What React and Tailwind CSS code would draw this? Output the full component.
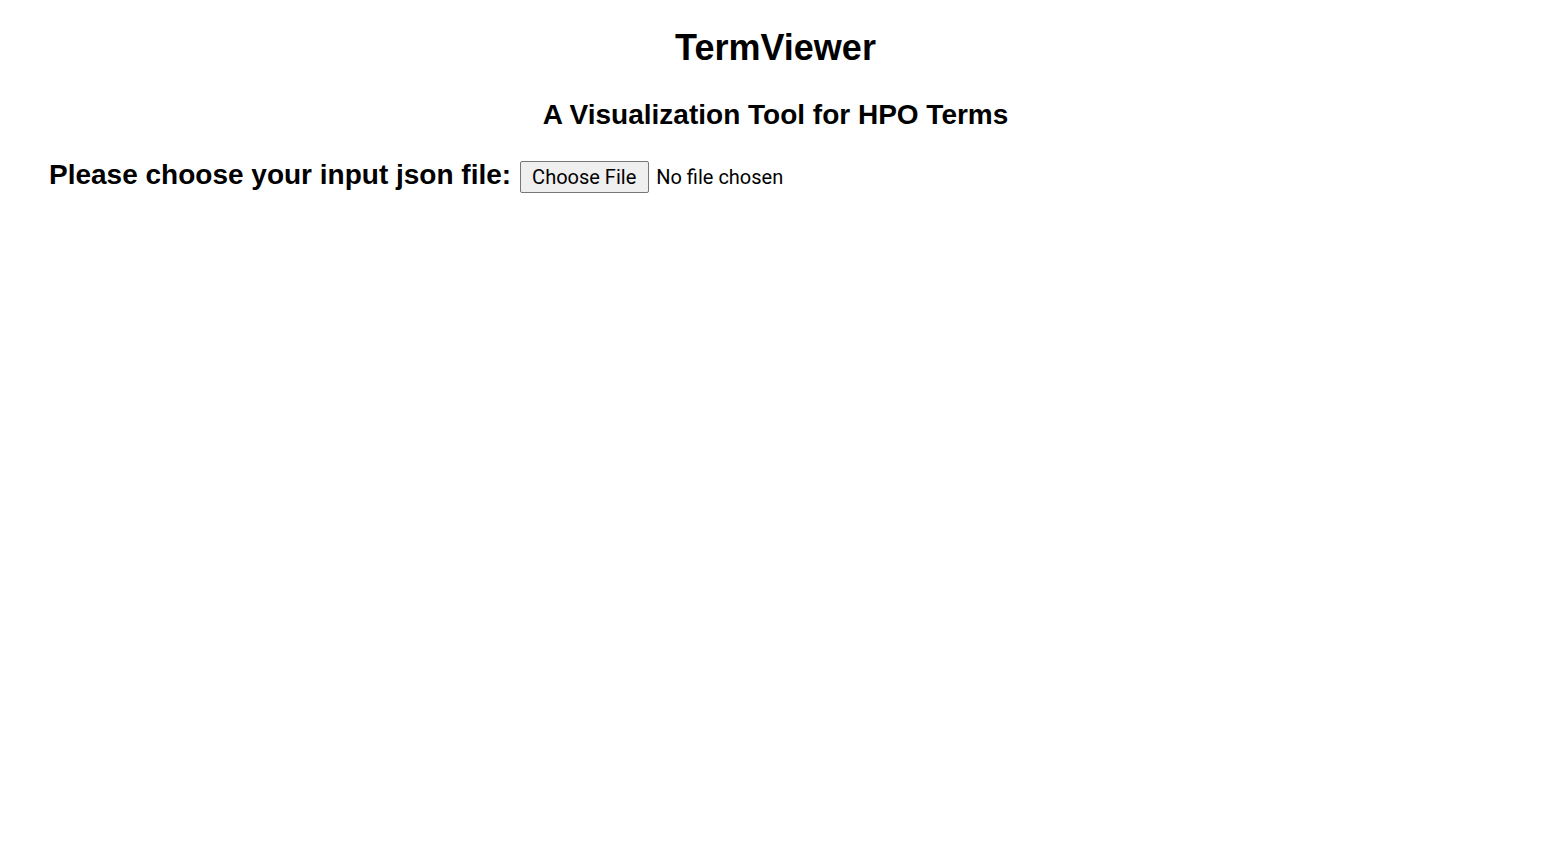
import React from 'react';

export default function App() {
   return (
      <div className="min-h-screen bg-white py-2 pl-[11px] pr-2 text-black" style={{ fontFamily: '"Liberation Sans", Arial, sans-serif' }}>
         <h1 className="text-center text-[36px] font-bold leading-[37px] mt-[21px]">TermViewer</h1>
         <h2 className="text-center text-[28px] font-bold leading-[30px] mt-[34px]">A Visualization Tool for HPO Terms</h2>
         <div className="flex items-center mt-[27px] ml-[38px]">
            <label htmlFor="file" className="text-[28px] font-bold leading-[30px] mr-[9px]">
               Please choose your input json file:
            </label>
            <input
               id="file"
               type="file"
               accept=".json"
               className="text-[20px] leading-[26px] mt-[4px] file:text-[20px] file:leading-[26px] file:mr-[7px] file:pl-[11px] file:pr-[12px] file:py-[2px] file:border file:border-[#767676] file:rounded-[2px] file:bg-[#efefef] file:font-normal"
               style={{ fontFamily: 'Roboto, sans-serif' }}
            />
         </div>
      </div>
   );
}
